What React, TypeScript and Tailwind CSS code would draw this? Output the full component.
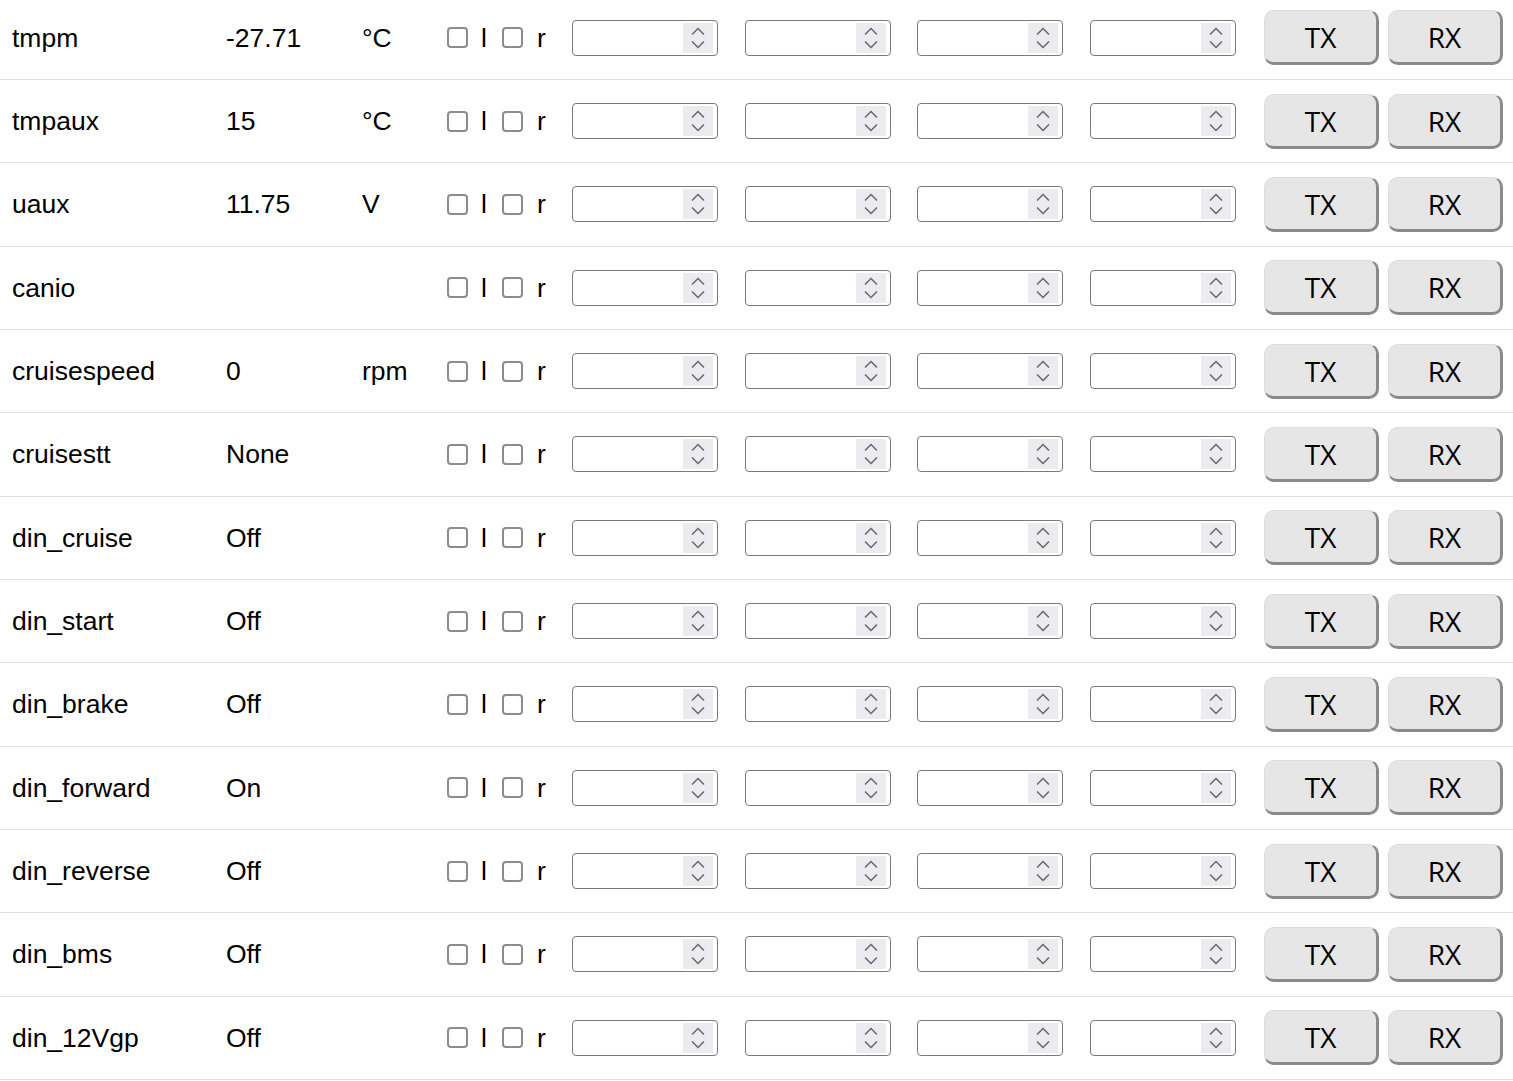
import React from "react";

type Param = { name: string; value: string; unit: string };

const params: Param[] = [
  { name: "tmpm", value: "-27.71", unit: "°C" },
  { name: "tmpaux", value: "15", unit: "°C" },
  { name: "uaux", value: "11.75", unit: "V" },
  { name: "canio", value: "", unit: "" },
  { name: "cruisespeed", value: "0", unit: "rpm" },
  { name: "cruisestt", value: "None", unit: "" },
  { name: "din_cruise", value: "Off", unit: "" },
  { name: "din_start", value: "Off", unit: "" },
  { name: "din_brake", value: "Off", unit: "" },
  { name: "din_forward", value: "On", unit: "" },
  { name: "din_reverse", value: "Off", unit: "" },
  { name: "din_bms", value: "Off", unit: "" },
  { name: "din_12Vgp", value: "Off", unit: "" },
];

function Box() {
  return <span className="block w-[21px] h-[21px] shrink-0 rounded-[4px] border-[2px] border-[#8b8b93] bg-white" />;
}

function NumberField() {
  return (
    <div className="w-[146px] h-[36px] shrink-0 flex items-center justify-end pr-[4px] rounded-[4px] border-[1.5px] border-[#7a7a7a] bg-white">
      <div className="w-[30px] h-[30px] flex items-center justify-center bg-[#ececf0]">
        <svg width="16" height="26" viewBox="0 0 16 26" fill="none" stroke="#6f6f6f" strokeWidth="1.7" strokeLinecap="round" strokeLinejoin="round">
          <path d="M2.5 9 L8 3.5 L13.5 9" />
          <path d="M2.5 17 L8 22.5 L13.5 17" />
        </svg>
      </div>
    </div>
  );
}

function Btn({ label }: { label: string }) {
  return (
    <button
      type="button"
      className="w-[115px] h-[55px] shrink-0 rounded-[10px] bg-[#e6e6e6] border-t border-l border-[#dcdcdc] border-r-[3px] border-b-[3px] border-r-[#8a8a8a] border-b-[#8a8a8a] text-[28px] text-black leading-none flex items-center justify-center pt-[1px]"
      style={{ fontFamily: '"Open Sans", "Noto Sans", sans-serif' }}
    >
      {label}
    </button>
  );
}

export default function App() {
  return (
    <div className="w-[1513px] h-[1081px] overflow-hidden bg-white text-black" style={{ fontFamily: '"Liberation Sans", Arial, sans-serif' }}>
      <div className="-mt-[3.33px]">
        {params.map((p) => (
          <div key={p.name} className="h-[83.33px] flex items-center border-b border-[#dedede] text-[26.5px] leading-none">
            <div className="w-[226px] pl-[12px] shrink-0">{p.name}</div>
            <div className="w-[136px] shrink-0">{p.value}</div>
            <div className="w-[85px] shrink-0">{p.unit}</div>
            <Box />
            <span className="ml-[13px] w-[6px]">l</span>
            <span className="ml-[15px]"><Box /></span>
            <span className="ml-[14px] w-[9px]">r</span>
            <div className="ml-[26px] flex gap-[26.7px]">
              <NumberField />
              <NumberField />
              <NumberField />
              <NumberField />
            </div>
            <div className="ml-[28px] flex gap-[9px]">
              <Btn label="TX" />
              <Btn label="RX" />
            </div>
          </div>
        ))}
      </div>
    </div>
  );
}
